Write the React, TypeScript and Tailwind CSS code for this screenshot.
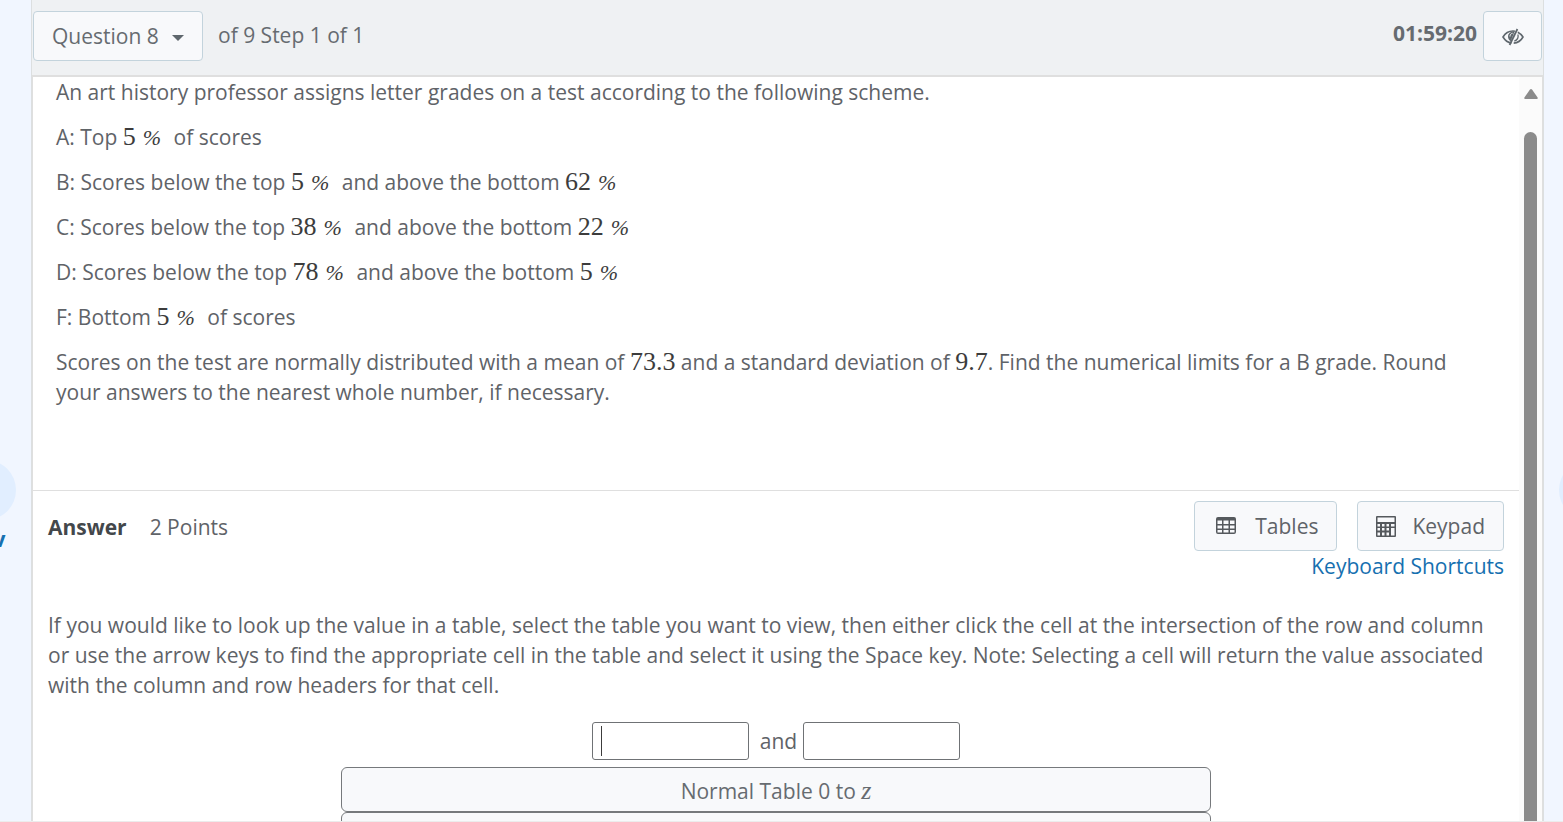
import React from "react";

function Num({ children }: { children: React.ReactNode }) {
  return (
    <span className="font-['Liberation_Serif',serif] text-[26px] leading-none text-[#3c3c3c]">
      {children}
    </span>
  );
}

function Percent() {
  return (
    <span className="ml-[7px] font-['Liberation_Serif',serif] text-[22px] leading-none text-[#3c3c3c] italic">
      %
    </span>
  );
}

function EyeOffIcon() {
  return (
    <svg width="22" height="20" viewBox="0 -2 22 20" fill="none" aria-hidden="true">
      <path d="M9.5 15C5.800 14.500 2.800 12 1 9C3.300 5 6.800 3 11 3C11.600 3 12.300 3.100 12.900 3.200" stroke="#5f676d" strokeWidth="1.600" />
      <path d="M15.800 4.200C18 5.300 19.700 7 21 9C19 12.600 15.500 14.900 11.700 15.100" stroke="#5f676d" strokeWidth="1.600" />
      <path d="M12.500 3.500C8.500 3.300 6 5.500 6 8.500C6 10.800 7.200 12.500 8.800 13.200Z" fill="#5f676d" />
      <path d="M8 8.500C8 6.700 9 5.500 10.600 5.200" stroke="#f8f9fb" strokeWidth="1" />
      <path d="M15.400 1L7.600 17" stroke="#5f676d" strokeWidth="1.800" />
      <path d="M16 6.500C16.500 9.500 15 12.300 12.300 13.200" stroke="#5f676d" strokeWidth="1.300" />
    </svg>
  );
}

function TableIcon() {
  return (
    <svg width="20" height="18" viewBox="0 0 20 18" aria-hidden="true">
      <path
        fill="#55595d"
        fillRule="evenodd"
        d="M2 0H18Q20 0 20 2V15Q20 17 18 17H2Q0 17 0 15V2Q0 0 2 0ZM1.500 3.500V7H6V3.500ZM7.500 3.500V7H12.500V3.500ZM14 3.500V7H18.500V3.500ZM1.500 8.500V11.500H6V8.500ZM7.500 8.500V11.500H12.500V8.500ZM14 8.500V11.500H18.500V8.500ZM1.500 13V15.500H6V13ZM7.500 13V15.500H12.500V13ZM14 13V15.500H18.500V13Z"
      />
    </svg>
  );
}

function KeypadIcon() {
  return (
    <svg width="20" height="21" viewBox="0 0 20 21" aria-hidden="true">
      <path
        fill="#55595d"
        fillRule="evenodd"
        d="M1 0H19Q20 0 20 1V20Q20 21 19 21H1Q0 21 0 20V1Q0 0 1 0ZM1.500 1.500V6H18.500V1.500ZM1.500 8V10.500H4V8ZM6 8V10.500H8.500V8ZM10.500 8V10.500H13V8ZM15 8V10.500H18.500V8ZM1.500 12V14.500H4V12ZM6 12V14.500H8.500V12ZM10.500 12V14.500H13V12ZM15 12V19.500H18.500V12ZM1.500 16.500V19.500H4V16.500ZM6 16.500V19.500H8.500V16.500ZM10.500 16.500V19.500H13V16.500Z"
      />
    </svg>
  );
}

const toolButton =
  "flex h-[50px] items-center rounded-[4px] border border-[#c3d3dc] bg-[#f8f9fb] text-[#5f6368]";

const answerInput =
  "h-[38px] w-[157px] rounded-[3px] border border-[#6f7275] bg-white px-2 outline-none";

const tableButton =
  "h-[45px] w-full rounded-[6px] border border-[#76797c] bg-[#f8f9fb] pt-0.5 text-[#666b70]";

export default function App() {
  return (
    <div className="flex h-screen overflow-hidden border-b border-[#ececec] bg-[#f1f6ff] font-['Open_Sans',sans-serif] text-[21px] leading-[30px] text-[#5f6368]">
      <nav className="flex w-[31px] shrink-0 items-start justify-end overflow-hidden pt-[460px] pr-[15px]">
        <a href="#prev" className="flex w-[60px] shrink-0 flex-col items-center font-bold text-[#1670b0]">
          <span className="h-[60px] w-[60px] rounded-full bg-[#e1eeff]" />
          <span className="mt-[4px] pr-2">Prev</span>
        </a>
      </nav>

      <main className="flex min-w-0 grow flex-col border-x border-[#dcdfe0]">
        <header className="flex h-[76px] shrink-0 items-start justify-between border-b border-[#dfdfdf] bg-[#eff1f3] px-px pt-[11px] text-[#666b70]">
          <div className="flex">
            <div className="relative">
              <select
                aria-label="Question"
                className="h-[50px] w-[170px] appearance-none rounded-[4px] border border-[#c3d3dc] bg-[#f8f9fb] pl-[18px] outline-none"
              >
                <option>Question 8</option>
              </select>
              <svg className="pointer-events-none absolute top-[24px] right-[19px]" width="12" height="6" viewBox="0 0 12 6" aria-hidden="true">
                <path d="M0 0H12L6 6Z" fill="#5f676d" />
              </svg>
            </div>
            <p className="ml-[15px] pt-[9px]">of 9 Step 1 of 1</p>
          </div>
          <div className="flex">
            <p className="mr-[6px] pt-[7px] font-bold">01:59:20</p>
            <button aria-label="Hide timer" className={toolButton + " w-[59px] justify-center"}>
              <EyeOffIcon />
            </button>
          </div>
        </header>

        <div className="flex min-h-0 grow border-x border-t border-[#dfdfdf] bg-white">
          <div className="min-w-0 grow overflow-hidden">
            <section className="flex h-[414px] flex-col gap-[15px] border-b border-[#dfdfdf] pr-[30px] pl-[23px]">
              <p>An art history professor assigns letter grades on a test according to the following scheme.</p>
              <p className="h-[30px]">
                A: Top <Num>5</Num><Percent /> <span className="ml-[7px]">of scores</span>
              </p>
              <p className="h-[30px]">
                B: Scores below the top <Num>5</Num><Percent /> <span className="ml-[7px]">and above the bottom</span> <Num>62</Num><Percent />
              </p>
              <p className="h-[30px]">
                C: Scores below the top <Num>38</Num><Percent /> <span className="ml-[7px]">and above the bottom</span> <Num>22</Num><Percent />
              </p>
              <p className="h-[30px]">
                D: Scores below the top <Num>78</Num><Percent /> <span className="ml-[7px]">and above the bottom</span> <Num>5</Num><Percent />
              </p>
              <p className="h-[30px]">
                F: Bottom <Num>5</Num><Percent /> <span className="ml-[7px]">of scores</span>
              </p>
              <p>
                Scores on the test are normally distributed with a mean of <Num>73.3</Num> and a standard deviation of <Num>9.7</Num>. Find the
                numerical limits for a B grade. Round your answers to the nearest whole number, if necessary.
              </p>
            </section>

            <section className="px-[15px] pt-[10px]">
              <div className="flex items-start justify-between">
                <div className="flex gap-[23px] pt-[11px]">
                  <h2 className="font-bold text-[#43474b]">Answer</h2>
                  <p>2 Points</p>
                </div>
                <div className="flex flex-col items-end">
                  <div className="flex gap-[20px]">
                    <button className={toolButton + " gap-[19px] pr-[18px] pl-[21px]"}>
                      <TableIcon />
                      Tables
                    </button>
                    <button className={toolButton + " gap-[16px] px-[18px]"}>
                      <KeypadIcon />
                      Keypad
                    </button>
                  </div>
                  <a href="#shortcuts" className="text-[#1670b0]">Keyboard Shortcuts</a>
                </div>
              </div>

              <p className="mt-[29px]">
                If you would like to look up the value in a table, select the table you want to view, then either click the cell at the
                intersection of the row and column or use the arrow keys to find the appropriate cell in the table and select it using the
                Space key. Note: Selecting a cell will return the value associated with the column and row headers for that cell.
              </p>

              <div className="mt-[22px] flex items-center justify-center">
                <div className="relative">
                  <input aria-label="Lower limit" className={answerInput + " block"} />
                  <span className="pointer-events-none absolute top-[4px] left-[9px] h-[30px] w-px bg-[#3c3c3c]" />
                </div>
                <span className="mr-[6px] ml-[11px]">and</span>
                <input aria-label="Upper limit" className={answerInput} />
              </div>

              <div className="mx-auto mt-[7px] w-full max-w-[870px]">
                <button className={tableButton}>
                  Normal Table 0 to <span className="font-['Liberation_Serif',serif] text-[26px] leading-none italic">z</span>
                </button>
                <button aria-label="Normal Table" className={tableButton} />
              </div>
            </section>
          </div>

          <div className="flex w-[23px] shrink-0 flex-col items-center bg-[#fbfbfb] pt-[12px]" aria-hidden="true">
            <svg width="14" height="10" viewBox="0 0 14 10" className="shrink-0">
              <path d="M6 0.500Q7 -0.500 8 0.500L13.600 8.500Q14 10 13 10H1Q0 10 0.400 8.500Z" fill="#8b8b8b" />
            </svg>
            <div className="mt-[33px] w-[13px] grow rounded-t-full bg-[#8b8b8b]" />
          </div>
        </div>
      </main>

      <nav className="flex w-[19px] shrink-0 items-start overflow-hidden pt-[460px] pl-[15px]">
        <a href="#next" className="flex w-[60px] shrink-0 flex-col items-center font-bold text-[#1670b0]">
          <span className="h-[60px] w-[60px] rounded-full bg-[#e1eeff]" />
          <span className="mt-[4px] pl-2">Next</span>
        </a>
      </nav>
    </div>
  );
}
